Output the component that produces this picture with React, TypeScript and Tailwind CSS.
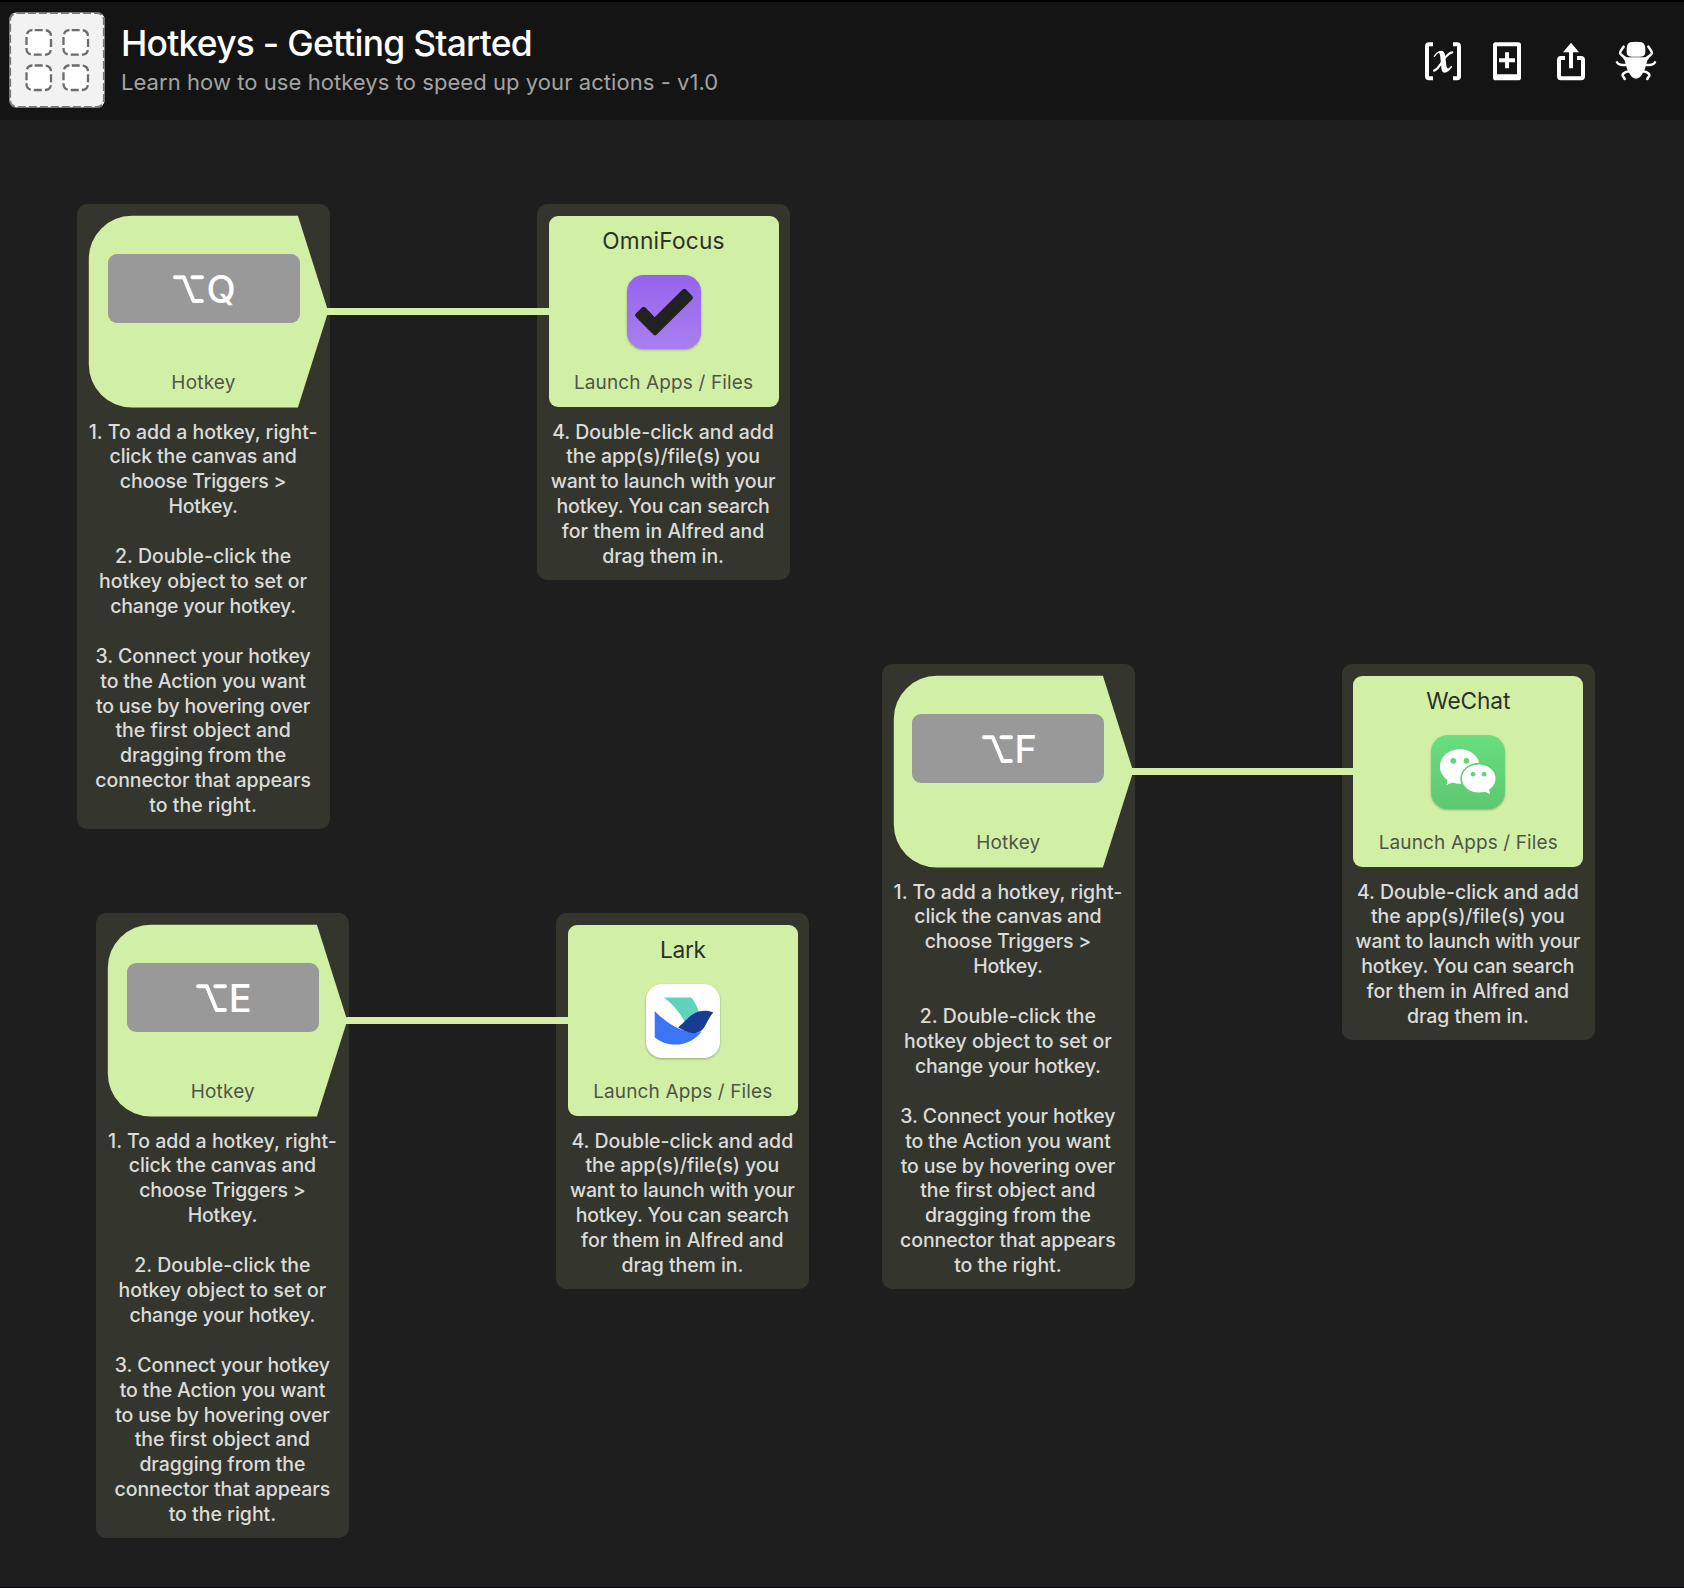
import React from "react";

type Line = [text: string, tracking?: string];

const T1 = "tracking-[-0.08px]";
const T2 = "tracking-[-0.15px]";
const T3 = "tracking-[-0.2px]";

const hotkeyNotes: Line[] = [
  ["1. To add a hotkey, right-"],
  ["click the canvas and", T2],
  ["choose Triggers >", T3],
  ["Hotkey.", T3],
  [""],
  ["2. Double-click the"],
  ["hotkey object to set or"],
  ["change your hotkey.", T3],
  [""],
  ["3. Connect your hotkey", T1],
  ["to the Action you want", T2],
  ["to use by hovering over", T3],
  ["the first object and"],
  ["dragging from the", T1],
  ["connector that appears", T1],
  ["to the right."],
];

const launchNotes: Line[] = [
  ["4. Double-click and add"],
  ["the app(s)/file(s) you", T1],
  ["want to launch with your", T2],
  ["hotkey. You can search", T2],
  ["for them in Alfred and"],
  ["drag them in.", T1],
];

function Notes({ lines }: { lines: Line[] }) {
  return (
    <div className="text-center text-[19.5px] font-medium leading-[24.91px] text-[#dbdcd9]">
      {lines.map(([text, tracking], i) => (
        <div key={i} className={`h-[24.91px] whitespace-pre ${tracking ?? ""}`}>
          {text}
        </div>
      ))}
    </div>
  );
}

function OptionGlyph() {
  return (
    <svg width="31" height="28" viewBox="0 0 31 28" fill="none" stroke="#fff" strokeWidth="3.9" strokeLinecap="round" strokeLinejoin="round" aria-label="Option">
      <path d="M2 2.2H10.8L20.6 26H29" />
      <path d="M19.4 2.2H29" />
    </svg>
  );
}

function HotkeyNode({ letter }: { letter: string }) {
  return (
    <section className="relative w-[253px] rounded-[10px] bg-[#34362e] pb-[10.8px] pt-[11.6px]">
      <svg className="absolute left-0 top-0" width="256" height="216" viewBox="0 0 256 216">
        <path d="M54.8 11.8H220.9L250 103.6V111.4L220.9 203.6H54.8A43 43 0 0 1 11.8 160.6V54.8A43 43 0 0 1 54.8 11.8Z" fill="#d2f0a5" />
      </svg>
      <div className="relative flex h-48 flex-col items-center pt-[38.4px]">
        <div className="flex h-[69px] w-48 justify-center rounded-[9px] bg-[#999999] pl-0.5 pt-[21px]">
          <OptionGlyph />
          <span className="ml-0.5 h-7 text-[38px] font-medium leading-7 text-white">{letter}</span>
        </div>
        <div className="mt-12 text-[19px] leading-6 tracking-[0.2px] text-[#4f544a]">Hotkey</div>
      </div>
      <div className="mt-[11.96px] -translate-x-[0.4px]">
        <Notes lines={hotkeyNotes} />
      </div>
    </section>
  );
}

function LaunchNode({ title, tracking, icon }: { title: string; tracking: string; icon: React.ReactNode }) {
  return (
    <section className="w-[253px] rounded-[10px] bg-[#34362e] px-[11.5px] pb-[10.8px] pt-[11.6px]">
      <div className="flex h-[191.6px] flex-col items-center rounded-[9px] bg-[#d2f0a5] pt-[11.4px]">
        <div className={`text-[22.7px] leading-7 text-[#2d3029] ${tracking}`}>{title}</div>
        <div className="mt-5 size-[74px] drop-shadow-[0_1px_1px_rgba(0,0,0,0.3)]">{icon}</div>
        <div className="mt-[22px] whitespace-nowrap text-[19px] leading-6 tracking-[0.13px] text-[#4f544a]">Launch Apps / Files</div>
      </div>
      <div className="-ml-[12.4px] -mr-[11.5px] mt-[12.36px]">
        <Notes lines={launchNotes} />
      </div>
    </section>
  );
}

function OmniFocusIcon() {
  return (
    <svg width="74" height="74" viewBox="0 0 222 222">
      <defs>
        <linearGradient id="omni" x1="0" y1="0" x2="0" y2="1">
          <stop offset="0" stopColor="#9663ee" />
          <stop offset="1" stopColor="#a97ff0" />
        </linearGradient>
      </defs>
      <rect width="222" height="222" rx="50" fill="url(#omni)" />
      <path d="M32 121L50 103L83 137L172 49L190 68L84 173Z" fill="#222" stroke="#222" strokeWidth="15" strokeLinejoin="round" />
    </svg>
  );
}

function LarkIcon() {
  return (
    <svg width="74" height="74" viewBox="289 237 221 221">
      <rect x="289" y="237" width="221" height="221" rx="48" fill="#fff" />
      <path d="M343 277H424C434 288 442 303 446 319C430 324 417 338 405 350C390 322 368 296 343 277Z" fill="#5fd3bc" />
      <path d="M315 318C350 355 400 384 436 383Q446 382 455 378C438 402 410 418 376 418C350 418 328 408 315 396Z" fill="#3c74f6" />
      <path d="M385 366C405 352 420 326 446 319C462 315 478 316 490 322C478 335 472 352 462 368C455 378 446 383 434 384C418 384 400 376 385 366Z" fill="#173d92" />
    </svg>
  );
}

function WeChatIcon() {
  return (
    <svg width="74" height="74" viewBox="306 239 220 221">
      <defs>
        <linearGradient id="wechat" x1="0" y1="0" x2="0" y2="1">
          <stop offset="0" stopColor="#69df7e" />
          <stop offset="1" stopColor="#5cc871" />
        </linearGradient>
      </defs>
      <rect x="306" y="239" width="220" height="221" rx="50" fill="url(#wechat)" />
      <ellipse cx="391.500" cy="333" rx="59.500" ry="51.500" fill="#fff" />
      <path d="M356 368L352 388L375 378Z" fill="#fff" />
      <ellipse cx="448" cy="369" rx="55" ry="47" fill="#60d075" />
      <ellipse cx="448" cy="369" rx="50" ry="42" fill="#fff" />
      <path d="M460 405L482 416L478 396Z" fill="#fff" />
      <g fill="#62d477">
        <circle cx="372" cy="316" r="8.500" />
        <circle cx="411.500" cy="316" r="8.500" />
        <circle cx="431" cy="356" r="7" />
        <circle cx="464" cy="356" r="7" />
      </g>
    </svg>
  );
}

function WorkflowIcon() {
  const cells = [
    [17.5, 18.2],
    [54.5, 18.2],
    [17.5, 53.5],
    [54.5, 53.5],
  ];
  return (
    <svg width="96" height="96" viewBox="0 0 96 96" className="shrink-0">
      <rect x="0.5" y="0.5" width="95" height="95" rx="7" fill="#f2f2f2" />
      <rect x="1" y="1" width="94" height="94" rx="7" fill="none" stroke="#767676" strokeWidth="2.2" strokeDasharray="8 3" />
      {cells.map(([x, y]) => (
        <rect key={`${x}-${y}`} x={x} y={y} width="24.500" height="24.500" rx="6" fill="#fff" stroke="#6c6c6c" strokeWidth="2.3" strokeDasharray="8 3.100" strokeDashoffset="-2.200" />
      ))}
    </svg>
  );
}

function HeaderIcons() {
  return (
    <div className="flex pt-[38.7px]">
      <svg className="h-10 w-9" viewBox="63 62 108 120">
        <path d="M87 72H75Q69 72 69 78V168Q69 174 75 174H87M147 72H159Q165 72 165 78V168Q165 174 159 174H147" fill="none" stroke="#fff" strokeWidth="12" />
        <path d="M91 108C96 100 101 96 107 94" fill="none" stroke="#fff" strokeWidth="4" strokeLinecap="round" />
        <path d="M103 95C112 87 121 91 123 104L127 134C128 143 131 146 135 143L142 136L145 139C138 149 130 157 121 157C115 157 113 150 112 143L109 111C108 102 106 98 103 95Z" fill="#fff" />
        <path d="M145 96C136 97 130 104 124 111L108 134C102 142 98 150 90 151" fill="none" stroke="#fff" strokeWidth="6.500" strokeLinecap="round" />
      </svg>
      <svg className="ml-8 h-10 w-7" viewBox="267 62 84 120">
        <path fillRule="evenodd" d="M275 66H343Q351 66 351 74V172Q351 180 343 180H275Q267 180 267 172V74Q267 66 275 66ZM279 78V162H339V78Z" fill="#fff" />
        <path d="M285 120H333M309 96V144" stroke="#fff" strokeWidth="12" />
      </svg>
      <svg className="ml-9 h-10 w-7" viewBox="459 62 84 120">
        <path d="M483 113H471Q465 113 465 119V168Q465 174 471 174H531Q537 174 537 168V119Q537 113 531 113H519" fill="none" stroke="#fff" strokeWidth="12" />
        <path d="M501 67L525 96H507V144H495V96H477Z" fill="#fff" />
      </svg>
      <svg className="ml-[30px] h-10 w-[42px]" viewBox="633 61 126 120">
        <path d="M679 65Q696 61 713 65Q723 68 724 84Q725 98 722 103Q719 108 708 108H684Q673 108 670 103Q667 98 668 84Q669 68 679 65Z" fill="#fff" />
        <path d="M655 110H737Q729 117 727 130Q724 146 716 158Q708 174 696 174Q684 174 676 158Q668 146 665 130Q663 117 655 110Z" fill="#fff" />
        <path d="M659 78C652 88 646 94 649 99C652 105 659 107 664 112M639 125C645 134 654 134 670 132M676 152C662 153 652 161 657 167Q660 170 662 175M733 78C740 88 746 94 743 99C740 105 733 107 728 112M753 125C747 134 738 134 722 132M716 152C730 153 740 161 735 167Q732 170 730 175" fill="none" stroke="#fff" strokeWidth="7.500" strokeLinecap="round" />
      </svg>
    </div>
  );
}

function Workflow({ place, letter, title, tracking, icon }: { place: string; letter: string; title: string; tracking: string; icon: React.ReactNode }) {
  return (
    <div className={`absolute flex w-[713px] items-start justify-between ${place}`}>
      <HotkeyNode letter={letter} />
      <LaunchNode title={title} tracking={tracking} icon={icon} />
      <div className="absolute left-[249px] top-[103.7px] h-[7.7px] w-[224px] bg-[#d2f0a5]" />
    </div>
  );
}

export default function App() {
  return (
    <div className="flex h-[1588px] w-[1684px] flex-col overflow-hidden border-b border-[#0c080c] bg-[#1e1e1e] font-['Inter',sans-serif]">
      <header className="flex h-[120px] shrink-0 items-start border-t-2 border-black bg-[#141414] pl-[9px] pr-[27px]">
        <div className="pt-2.5">
          <WorkflowIcon />
        </div>
        <div className="ml-4 flex-1 whitespace-nowrap pt-[22px]">
          <h1 className="text-[35.4px] font-medium leading-[40px] tracking-[-0.74px] text-white">Hotkeys - Getting Started</h1>
          <p className="mt-1 text-[22px] leading-7 tracking-[0.06px] text-[#a3a3a3]">Learn how to use hotkeys to speed up your actions - v1.0</p>
        </div>
        <HeaderIcons />
      </header>
      <main className="relative flex-1">
        <Workflow place="left-[77px] top-[84px]" letter="Q" title="OmniFocus" tracking="tracking-[0.2px]" icon={<OmniFocusIcon />} />
        <Workflow place="left-[881.8px] top-[544px]" letter="F" title="WeChat" tracking="tracking-[-0.1px]" icon={<WeChatIcon />} />
        <Workflow place="left-[96.3px] top-[793px]" letter="E" title="Lark" tracking="tracking-[-0.3px]" icon={<LarkIcon />} />
      </main>
    </div>
  );
}
